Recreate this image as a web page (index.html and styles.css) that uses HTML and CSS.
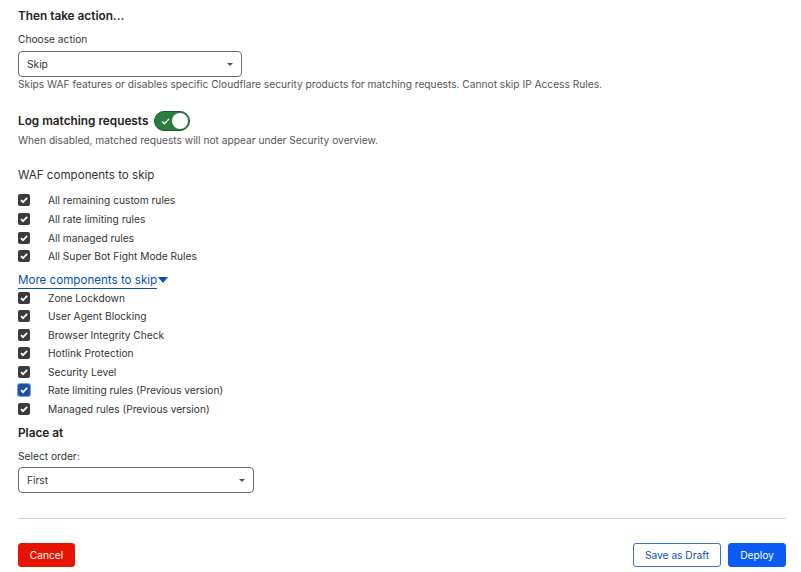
FILE: index.html
```html
<!DOCTYPE html>
<html lang="en">
<head>
    <meta charset="UTF-8">
    <title>Skip rule action</title>
    <link rel="stylesheet" href="styles.css">
</head>
<body>
    <div class="page">
        <h3 class="section-title">Then take action...</h3>
        <label class="field-label">Choose action</label>
        <div class="select select-action">
            <span>Skip</span>
            <span class="caret"></span>
        </div>
        <p class="help">Skips WAF features or disables specific Cloudflare security products for matching requests. Cannot skip IP Access Rules.</p>

        <div class="toggle-row">
            <h3 class="section-title inline">Log matching requests</h3>
            <span class="toggle">
                <svg class="toggle-check" width="9" height="7" viewBox="0 0 9 7"><path d="M1 3.5 L3.4 5.8 L8 1" fill="none" stroke="#fff" stroke-width="1.3"/></svg>
                <span class="knob"></span>
            </span>
        </div>
        <p class="help help-log">When disabled, matched requests will not appear under Security overview.</p>

        <h4 class="group-title">WAF components to skip</h4>
        <ul class="checks">
            <li><span class="box"></span>All remaining custom rules</li>
            <li><span class="box"></span>All rate limiting rules</li>
            <li><span class="box"></span>All managed rules</li>
            <li><span class="box"></span>All Super Bot Fight Mode Rules</li>
        </ul>

        <a class="more" href="#"><span class="more-text">More components to skip</span><span class="tri"></span></a>
        <ul class="checks checks-more">
            <li><span class="box"></span>Zone Lockdown</li>
            <li><span class="box"></span>User Agent Blocking</li>
            <li><span class="box"></span>Browser Integrity Check</li>
            <li><span class="box"></span>Hotlink Protection</li>
            <li><span class="box"></span>Security Level</li>
            <li><span class="box focus"></span>Rate limiting rules (Previous version)</li>
            <li><span class="box"></span>Managed rules (Previous version)</li>
        </ul>

        <h3 class="section-title place">Place at</h3>
        <label class="field-label">Select order:</label>
        <div class="select select-order">
            <span>First</span>
            <span class="caret"></span>
        </div>

        <hr class="divider">

        <div class="actions">
            <button class="btn btn-cancel">Cancel</button>
            <div class="right">
                <button class="btn btn-draft">Save as Draft</button>
                <button class="btn btn-deploy">Deploy</button>
            </div>
        </div>
    </div>
</body>
</html>
```

FILE: styles.css
```css
body {
    margin: 0;
    font-family: Inter, "Noto Sans", sans-serif;
    color: #313131;
    background: #fff;
}
.page {
    padding: 7px 15px 0 18px;
}
.section-title {
    font-size: 11.8px;
    font-weight: 600;
    color: #222;
    margin: 0;
    line-height: 18px;
}
.field-label {
    display: block;
    font-size: 10.2px;
    line-height: 14px;
    margin-top: 7px;
    color: #333;
}
.select {
    box-sizing: border-box;
    height: 26px;
    margin-top: 5px;
    border: 1px solid #6d6d6d;
    border-radius: 4px;
    display: flex;
    align-items: center;
    justify-content: space-between;
    padding: 0 8px;
    font-size: 10.2px;
    color: #333;
}
.select-action { width: 224px; }
.select-order { width: 236px; margin-top: 4px; }
.caret {
    width: 0;
    height: 0;
    border-left: 3px solid transparent;
    border-right: 3px solid transparent;
    border-top: 3px solid #555;
}
.help {
    font-size: 10.2px;
    line-height: 14px;
    color: #555;
    margin: 0;
}
.help-log { margin-top: 2px; }
.toggle-row {
    display: flex;
    align-items: center;
    gap: 6px;
    margin-top: 20px;
}
.toggle {
    position: relative;
    box-sizing: border-box;
    width: 36px;
    height: 20px;
    border-radius: 10px;
    background: #2c7c3f;
    border: 1px solid #1c5a2b;
    display: inline-block;
}
.toggle-check {
    position: absolute;
    left: 6px;
    top: 6px;
}
.knob {
    position: absolute;
    right: 1px;
    top: 1px;
    width: 16px;
    height: 16px;
    border-radius: 50%;
    background: #fff;
}
.group-title {
    font-size: 11.6px;
    font-weight: 400;
    color: #333;
    margin: 19px 0 0;
    line-height: 18px;
}
.checks {
    list-style: none;
    padding: 0;
    margin: 7px 0 0;
}
.checks li {
    display: flex;
    align-items: center;
    height: 18.67px;
    font-size: 10.2px;
    color: #333;
}
.checks-more li { height: 18.5px; }
.box {
    box-sizing: border-box;
    width: 12px;
    height: 12px;
    border-radius: 2px;
    background: #3b3b3b url("data:image/svg+xml,%3Csvg xmlns='http://www.w3.org/2000/svg' width='12' height='12' viewBox='0 0 12 12'%3E%3Cpath d='M3 6.2 L5 8.2 L9.2 3.8' fill='none' stroke='white' stroke-width='1.7'/%3E%3C/svg%3E") center no-repeat;
    margin-right: 18px;
    flex: none;
}
.box.focus {
    background-color: #1e4fa6;
    box-shadow: 0 0 0 1px #7aa4ea;
}
.more {
    display: inline-flex;
    align-items: center;
    margin-top: 6px;
    font-size: 11.6px;
    line-height: 16px;
    color: #0a4fb5;
    text-decoration: none;
}
.more-text {
    border-bottom: 1px solid #0a4fb5;
}
.tri {
    width: 0;
    height: 0;
    border-left: 5px solid transparent;
    border-right: 5px solid transparent;
    border-top: 6px solid #0a4fb5;
    margin-left: 1px;
}
.checks.checks-more { margin-top: 0; }
.place { margin-top: 6px; }
.divider {
    border: 0;
    border-top: 1px solid #cfcfcf;
    margin: 25px 0 0;
}
.actions {
    display: flex;
    justify-content: space-between;
    margin-top: 24px;
}
.right {
    display: flex;
    gap: 7px;
}
.btn {
    font-family: inherit;
    font-size: 10.2px;
    height: 24px;
    border-radius: 3px;
    padding: 0;
    white-space: nowrap;
    cursor: pointer;
}
.btn-cancel {
    background: #e81403;
    color: #fff;
    border: 1px solid #e81403;
    width: 57px;
}
.btn-draft {
    background: #fff;
    color: #0a4fb5;
    border: 1px solid #3873d6;
    width: 88px;
}
.btn-deploy {
    background: #0a5cf5;
    color: #fff;
    border: 1px solid #0a5cf5;
    width: 58px;
}
```
